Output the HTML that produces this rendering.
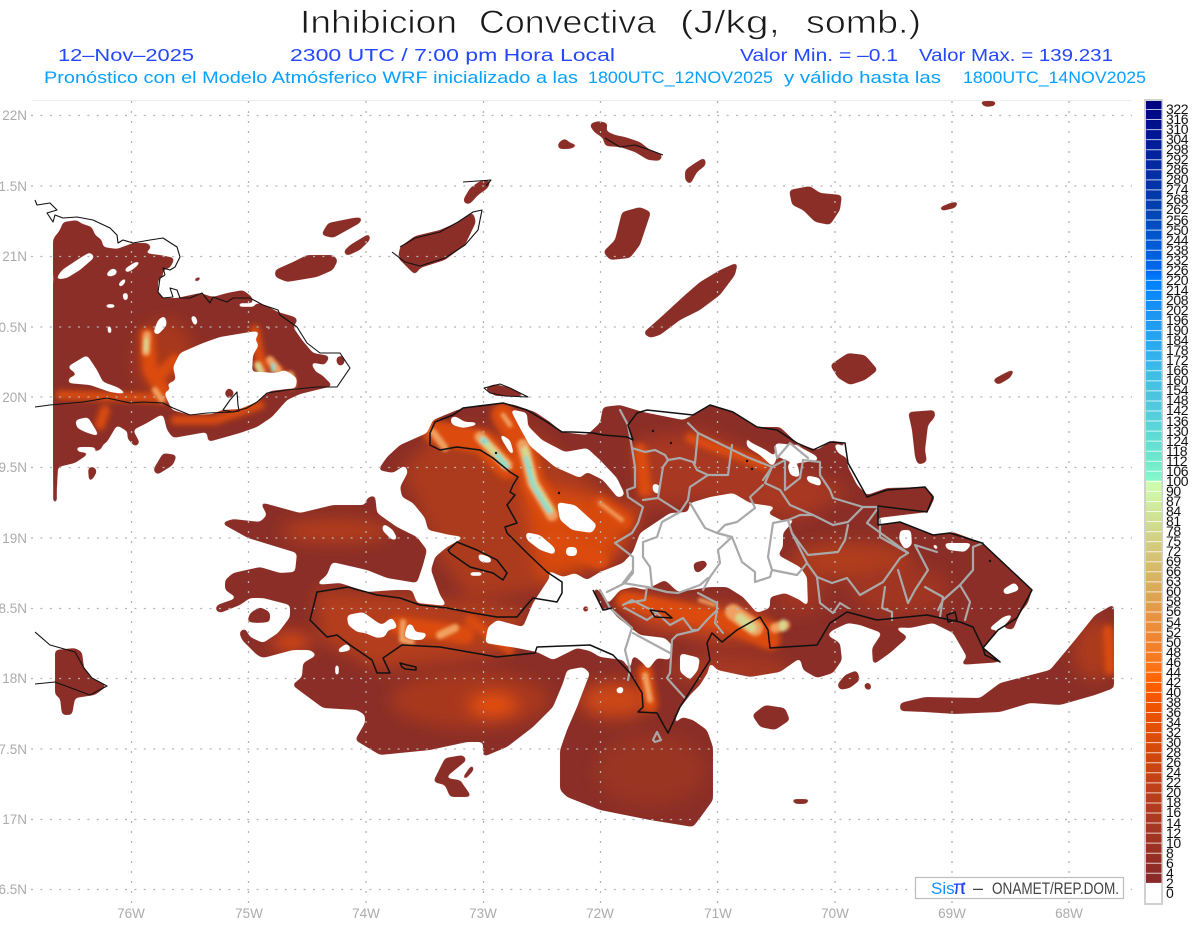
<!DOCTYPE html>
<html><head><meta charset="utf-8"><title>Inhibicion Convectiva</title>
<style>html,body{margin:0;padding:0;background:#fff}svg{display:block;font-family:"Liberation Sans",sans-serif}</style>
</head><body>
<svg width="1200" height="927" viewBox="0 0 1200 927" xmlns="http://www.w3.org/2000/svg">
<defs>
<filter id="b3" filterUnits="userSpaceOnUse" x="0" y="90" width="1200" height="830"><feGaussianBlur stdDeviation="3"/></filter>
<filter id="b2" filterUnits="userSpaceOnUse" x="0" y="90" width="1200" height="830"><feGaussianBlur stdDeviation="1.6"/></filter>
<filter id="b8" filterUnits="userSpaceOnUse" x="0" y="90" width="1200" height="830"><feGaussianBlur stdDeviation="8"/></filter>
<filter id="round" filterUnits="userSpaceOnUse" x="0" y="90" width="1200" height="830" color-interpolation-filters="sRGB"><feGaussianBlur stdDeviation="2"/><feComponentTransfer><feFuncA type="linear" slope="10" intercept="-4.5"/></feComponentTransfer></filter>
<linearGradient id="cb" x1="0" y1="0" x2="0" y2="1">
<stop offset="0" stop-color="#00007f"/><stop offset=".061" stop-color="#00209a"/><stop offset=".139" stop-color="#0042b0"/><stop offset=".178" stop-color="#0058d0"/><stop offset=".216" stop-color="#0068ea"/><stop offset=".229" stop-color="#0080ff"/><stop offset=".267" stop-color="#1a92f2"/><stop offset=".306" stop-color="#28a6ee"/><stop offset=".344" stop-color="#3cbce8"/><stop offset=".382" stop-color="#50c4e0"/><stop offset=".422" stop-color="#5cd8d8"/><stop offset=".46" stop-color="#70e8cc"/><stop offset=".485" stop-color="#88f8cc"/><stop offset=".486" stop-color="#ccffb0"/><stop offset=".499" stop-color="#d0f8a8"/><stop offset=".524" stop-color="#cfe898"/><stop offset=".55" stop-color="#d0d888"/><stop offset=".575" stop-color="#d4c878"/><stop offset=".601" stop-color="#d8b868"/><stop offset=".627" stop-color="#dca858"/><stop offset=".652" stop-color="#e49848"/><stop offset=".679" stop-color="#ec8a38"/><stop offset=".705" stop-color="#f47e28"/><stop offset=".73" stop-color="#fc7010"/><stop offset=".743" stop-color="#ff6000"/><stop offset=".769" stop-color="#f05400"/><stop offset=".807" stop-color="#e04e08"/><stop offset=".845" stop-color="#cc4610"/><stop offset=".884" stop-color="#bc4018"/><stop offset=".922" stop-color="#a83a20"/><stop offset=".962" stop-color="#983024"/><stop offset=".987" stop-color="#8c2c28"/><stop offset="1" stop-color="#8a2a2a"/>
</linearGradient>
<mask id="land" maskUnits="userSpaceOnUse" x="0" y="90" width="1200" height="830"><path fill="#fff" fill-rule="evenodd" filter="url(#round)" d="
M53 503 53 239 60 230 63 222 78 220 80 223 92 227 95 235 102 240 103 247 117 249 133 243 148 243 152 248 143 253 160 255 175 258 170 268 163 270 163 277 158 280 158 293 163 298 177 298 200 293 213 297 227 293 243 290 252 297 253 302 265 305 278 312 295 317 298 320 293 327 302 340 313 353 330 356 325 365 310 362 316 372 322 375 333 386 300 394 287 400 272 417 257 427 240 433 208 442 207 432 173 438 167 430 163 414 157 417 147 423 133 430 140 443 135 447 127 438 128 432 117 425 107 442 90 453 75 463 58 467 57 490 57 503Z
M250 332 220 337 203 343 180 353 173 367 176 380 165 385 165 395 172 410 190 415 213 414 222 410 240 409 257 402 270 391 296 388 297 378 285 370 275 373 262 372 252 372 253 355 259 345 255 340 260 331Z
M55 280 62 270 80 258 90 252 95 257 80 270 67 278Z
M105 275 112 268 118 270 116 275 108 277Z
M117 285 125 277 127 280 121 288Z
M123 270 135 262 143 260 135 268 127 273Z
M122 293 128 292 128 300 124 302Z
M105 304 116 304 116 308 105 308Z
M107 325 111 325 112 334 108 335Z
M153 333 158 320 165 315 167 325 158 335Z
M190 316 195 315 198 322 195 328Z
M67 367 87 355 97 370 103 382 117 387 130 395 110 392 90 385 67 383 70 377 78 375Z
M75 420 88 417 100 437 85 432 77 428Z
M75 447 105 447 95 453 78 452Z
M238 303 255 303 256 307 238 307Z
M267 322 270 325 271 333 267 330Z
M224 393 229 387 235 393 229 400Z
M164 388 168 385 171 389 167 392Z
M337 356 344 356 345 363 340 367 336 362Z
M589 124 598 121 608 123 606 131 615 135 625 137 640 142 650 150 663 155 660 161 648 160 635 152 620 147 605 146 603 138 594 132Z
M558 143 565 138 570 143 580 145 570 149 558 149Z
M463 200 470 188 480 181 491 180 488 188 478 195 470 204 465 204Z
M400 247 415 236 440 230 458 222 473 212 476 222 465 245 445 260 420 268 415 275 405 265 398 258Z
M343 252 350 245 370 233 370 240 360 250 347 256Z
M321 235 328 223 353 218 363 217 360 223 333 238Z
M275 270 293 262 307 255 333 255 338 260 333 270 317 277 287 282 275 277Z
M603 252 615 240 622 212 640 207 651 212 645 230 640 245 630 258 610 260Z
M643 333 660 318 685 295 700 282 720 270 738 262 735 275 720 295 700 310 680 320 660 335 650 338Z
M685 170 695 163 705 157 706 165 697 172 690 185 685 180Z
M789 190 810 186 820 193 842 195 840 210 830 225 815 222 803 210 792 205Z
M938 208 950 203 960 201 955 208 942 211Z
M830 365 848 353 865 355 878 370 865 380 850 385 838 378Z
M992 380 1005 373 1016 368 1010 378 998 385Z
M908 412 935 410 935 417 928 425 925 450 927 462 918 465 915 457 912 430Z
M484 388 495 384 510 388 528 397 510 396 495 396Z
M55 650 75 648 82 652 84 668 92 678 107 686 95 695 75 698 72 715 62 715 60 698 55 695Z
M153 470 163 453 177 455 173 465 157 475Z
M88 467 95 467 97 472 92 480 89 483Z
M193 279 200 276 203 278 195 283Z
M978 101 997 101 995 106 985 107Z
M900 703 925 697 980 698 1000 683 1050 670 1075 640 1095 615 1114 604 1114 688 1095 695 1060 705 1030 703 1000 712 955 714 925 712 900 711Z
M837 685 845 675 857 670 860 680 850 688 840 690Z
M863 684 870 682 872 690 866 690Z
M433 782 445 758 463 755 467 760 445 778 460 780 472 797 450 797 445 785Z
M462 778 473 763 474 770 465 780Z
M752 715 765 705 785 708 790 720 775 730 760 727Z
M790 799 812 799 806 804 795 804Z
M250 613 260 607 270 612 270 622 258 623 247 622Z
M593 590 597 588 612 608 603 612 600 603Z
M582 607 588 605 589 611 584 613Z
M693 563 705 560 708 565 700 572 695 573Z
M221 523 233 519 260 522 267 515 260 502 300 513 333 505 365 505 367 498 375 495 377 513 397 527 417 537 427 550 423 565 417 583 387 578 367 570 332 562 327 575 315 585 340 583 367 592 395 590 412 590 417 603 447 606 440 595 431 570 435 557 447 547 465 537 450 535 428 530 425 518 413 503 402 497 400 487 408 472 405 465 393 473 378 470 387 457 400 445 427 433 433 420 457 410 480 405 503 403 515 405 535 412 550 422 562 432 587 435 600 423 603 407 620 405 643 412 683 420 693 415 710 405 733 412 757 427 780 427 797 443 817 450 833 440 845 443 848 467 857 485 867 495 887 488 925 487 935 497 928 512 878 518 878 525 900 522 923 532 933 535 953 532 983 543 1010 570 1032 590 1028 603 1020 613 1013 630 1000 627 997 633 982 648 1002 662 960 665 967 657 953 633 933 623 910 628 893 627 908 637 890 653 873 665 872 648 882 633 860 625 848 623 833 630 827 635 840 643 842 660 833 673 817 678 803 670 800 658 780 672 750 677 717 670 710 662 708 672 700 685 690 695 680 708 672 727 682 717 693 720 707 730 713 747 713 800 700 818 693 827 650 820 600 810 567 797 560 790 560 750 567 730 577 707 590 673 583 667 567 670 563 683 553 707 533 727 507 747 483 757 483 742 467 742 430 750 380 755 355 740 365 723 365 715 357 710 323 708 292 685 302 677 303 663 317 655 310 650 293 650 263 658 257 655 242 640 239 632 245 628 250 637 263 643 278 633 290 617 290 605 263 598 250 598 240 605 220 613 215 610 217 605 237 598 225 590 225 580 233 573 260 567 280 573 295 572 297 553 248 538Z
M533 603 550 577 547 570 563 577 575 573 587 580 600 572 623 563 633 552 640 533 670 513 688 512 690 503 710 497 733 493 750 503 777 507 767 513 785 522 797 517 783 533 783 547 778 555 800 567 807 577 808 607 800 600 785 593 770 597 770 608 757 613 743 597 727 587 710 587 678 592 665 580 645 590 633 587 620 590 607 605 617 617 640 635 665 638 672 645 670 660 657 658 648 670 643 663 633 655 630 670 623 660 600 657 590 651 577 648 553 660 537 652 517 648 485 643 488 627 497 620 523 627Z
M510 409 527 413 528 426 542 440 565 452 587 448 600 460 617 478 625 495 618 498 603 480 587 472 580 478 555 467 530 446 520 428Z
M450 418 455 416 465 422 477 422 478 425 463 428 452 425Z
M498 432 510 440 515 457 510 453 502 440Z
M557 502 575 505 597 525 592 533 572 530 560 520Z
M525 532 540 535 555 548 555 555 540 550 527 540Z
M566 547 577 547 577 556 566 556Z
M477 553 490 557 493 563 480 562Z
M469 572 483 572 483 576 469 576Z
M383 523 393 530 398 540 392 540 382 530Z
M680 653 700 658 698 670 690 680 680 672Z
M616 688 624 686 623 694 616 693Z
M833 443 845 447 847 458 838 453Z
M745 432 750 442 766 450 777 458 773 467 760 455 747 447Z
M775 443 795 445 815 455 820 460 800 463 785 460 775 455Z
M787 463 798 465 800 478 790 475Z
M805 475 820 478 822 487 808 482Z
M652 483 660 485 660 495 653 492Z
M900 530 911 530 912 545 905 550 899 540Z
M943 543 973 543 965 552 948 550Z
M930 543 938 545 938 553Z
M1002 590 1015 582 1020 590 1005 595Z
M987 630 1003 617 1015 613 1005 625 997 630Z
M347 615 363 612 377 622 382 625 392 617 398 628 388 630 385 637 377 638 365 633 357 632 348 625Z
M404 637 408 623 413 625 415 632 428 633 423 640 413 640Z
M337 650 347 643 352 650 338 653Z
M335 664 339 664 339 676 335 676Z
M298 596 302 596 302 600 298 600Z
"/></mask>
</defs>

<!-- header -->
<g font-size="32" fill="#1a1a1a" stroke="#fff" stroke-width=".7">
<text x="300" y="33" textLength="157" lengthAdjust="spacingAndGlyphs">Inhibicion</text>
<text x="479" y="33" textLength="177" lengthAdjust="spacingAndGlyphs">Convectiva</text>
<text x="680" y="33" textLength="100" lengthAdjust="spacingAndGlyphs">(J/kg,</text>
<text x="806" y="33" textLength="115" lengthAdjust="spacingAndGlyphs">somb.)</text>
</g>
<g font-size="17.5" fill="#2447ff">
<text x="58" y="61" textLength="136" lengthAdjust="spacingAndGlyphs">12–Nov–2025</text>
<text x="290" y="61" textLength="325" lengthAdjust="spacingAndGlyphs">2300 UTC / 7:00 pm Hora Local</text>
<text x="740" y="61" textLength="158" lengthAdjust="spacingAndGlyphs">Valor Min. = –0.1</text>
<text x="919" y="61" textLength="194" lengthAdjust="spacingAndGlyphs">Valor Max. = 139.231</text>
</g>
<g font-size="16.5" fill="#06a0ff">
<text x="44" y="83" textLength="534" lengthAdjust="spacingAndGlyphs">Pronóstico con el Modelo Atmósferico WRF inicializado a las</text>
<text x="588" y="83" textLength="185" lengthAdjust="spacingAndGlyphs">1800UTC_12NOV2025</text>
<text x="784" y="83" textLength="157" lengthAdjust="spacingAndGlyphs">y válido hasta las</text>
<text x="963" y="83" textLength="183" lengthAdjust="spacingAndGlyphs">1800UTC_14NOV2025</text>
</g>
<path d="M32 100.5H1132" stroke="#eee" stroke-width="1"/>

<!-- map fill -->
<g mask="url(#land)">
<rect x="0" y="90" width="1200" height="830" fill="#8b2e27"/>
<g filter="url(#b8)">
<path d="M315 590 400 595 530 610 500 655 380 670 320 640Z" fill="#b33c1c"/>
<path d="M400 470 440 430 530 430 640 520 620 560 540 590 470 600 440 560 420 510Z" fill="#ab3a1d"/>
<path d="M520 480 640 510 610 560 540 580Z" fill="#d84a10"/>
<path d="M635 440 700 430 850 490 800 520 700 500 640 510Z" fill="#a83820"/>
<path d="M620 595 760 610 775 640 710 640 640 625Z" fill="#c8441a"/>
<ellipse cx="850" cy="560" rx="60" ry="18" fill="#b03c1c"/>
<ellipse cx="800" cy="590" rx="25" ry="25" fill="#a03620"/>
<ellipse cx="900" cy="590" rx="50" ry="25" fill="#a03620"/>
<ellipse cx="470" cy="700" rx="80" ry="28" fill="#a8381f"/>
<ellipse cx="493" cy="705" rx="24" ry="11" fill="#e6500e"/>
<ellipse cx="615" cy="700" rx="35" ry="18" fill="#cc4616"/>
<ellipse cx="650" cy="770" rx="55" ry="35" fill="#9a3423"/>
<ellipse cx="335" cy="531" rx="55" ry="12" fill="#b33c1c"/>
<ellipse cx="291" cy="642" rx="20" ry="9" fill="#d84a12"/>
<ellipse cx="730" cy="670" rx="60" ry="16" fill="#a53820"/>
<ellipse cx="165" cy="360" rx="30" ry="40" fill="#a8381f"/>
<ellipse cx="1095" cy="650" rx="22" ry="30" fill="#ab3a1d"/>
</g>
<g filter="url(#b3)" fill="none" stroke-linecap="round" stroke-linejoin="round">
<g stroke="#dc4c0e">
<path d="M60 395 165 398" stroke-width="9"/>
<path d="M147 335 150 370 165 395" stroke-width="15"/>
<path d="M155 380 175 360" stroke-width="12"/>
<path d="M175 420 215 420 260 405" stroke-width="9"/>
<path d="M105 410 100 425" stroke-width="10"/>
<path d="M255 330 260 360 290 380" stroke-width="10"/>
<path d="M435 432 483 442 507 467" stroke-width="24"/>
<path d="M503 415 523 445 533 483 552 515" stroke-width="24"/>
<path d="M600 503 625 522" stroke-width="14"/>
<path d="M555 540 600 560" stroke-width="18"/>
<path d="M690 438 765 465" stroke-width="10"/>
<path d="M640 450 645 490" stroke-width="14"/>
<path d="M625 600 770 630" stroke-width="18"/>
<path d="M398 625 465 635" stroke-width="18"/>
<path d="M470 620 510 650" stroke-width="10"/>
<path d="M645 672 650 705" stroke-width="15"/>
<path d="M1108 630 1110 670" stroke-width="10"/>
<path d="M730 622 770 640" stroke-width="20"/>
</g>
</g>
<g filter="url(#b2)" fill="none" stroke-linecap="round" stroke-linejoin="round">
<g stroke="#f0a060">
<path d="M147 335 146 352" stroke-width="8"/>
<path d="M155 390 162 400" stroke-width="6"/>
<path d="M433 432 445 448" stroke-width="7"/>
<path d="M480 437 507 465" stroke-width="11"/>
<path d="M523 445 533 483 552 515" stroke-width="12"/>
<path d="M503 415 510 425" stroke-width="5"/>
<path d="M600 503 622 520" stroke-width="4"/>
<path d="M733 612 755 628" stroke-width="16"/>
<path d="M403 622 402 640 412 642" stroke-width="6"/>
<path d="M455 628 440 635" stroke-width="8"/>
<path d="M645 675 650 700" stroke-width="6"/>
<path d="M258 365 262 372 M270 360 278 370 M290 375 292 385" stroke-width="8"/>
<path d="M775 628 785 625" stroke-width="10"/>
<path d="M700 600 715 605" stroke-width="4"/>
</g>
<g stroke="#d6d890">
<path d="M146 340 146 350" stroke-width="4"/>
<path d="M483 440 506 465" stroke-width="7"/>
<path d="M525 450 534 485 550 510" stroke-width="7"/>
<path d="M740 618 752 628" stroke-width="9"/>
<path d="M258 365 260 372 M290 377 291 384" stroke-width="5"/>
<path d="M783 623 783 628" stroke-width="7"/>
</g>
<g stroke="#78e0d4">
<path d="M483 440 486 442" stroke-width="5"/>
<path d="M497 455 507 467" stroke-width="4"/>
<path d="M526 458 533 485 545 505 550 512" stroke-width="4"/>
<path d="M273 365 273 370" stroke-width="4"/>
</g>
</g>
</g>

<!-- grid -->
<g fill="none" stroke="#b4b4b4" stroke-width="1.3">
<path stroke-dasharray="2 7.400" d="M31 115.5H1132M31 186H1132M31 256.5H1132M31 327H1132M31 397H1132M31 467.5H1132M31 538H1132M31 608.5H1132M31 678.5H1132M31 749H1132M31 819.5H1132M31 889.5H1132"/>
<path stroke-dasharray="2 8" d="M131.500 101V905M248.500 101V905M366 101V905M483.500 101V905M600.500 101V905M717.500 101V905M835 101V905M952 101V905M1069 101V905"/>
</g>

<!-- gray borders -->
<g fill="none" stroke="#a9a9a9" stroke-width="2.2" stroke-linejoin="round" stroke-linecap="round">
<path d="M620 410 628 425 632 448 635 467 635 487 627 490 628 497 643 507 638 523 632 533 615 543 633 557 633 573 625 583 607 592"/>
<path d="M632 448 645 452 655 450 665 455 668 460 680 458 693 462 697 470 708 475 728 475 732 445"/>
<path d="M688 423 698 433 695 463"/>
<path d="M698 433 747 457 772 467 765 483 780 490 790 505 813 515 833 525 848 522 863 507 878 507"/>
<path d="M668 460 663 467 658 498 680 512 662 522 657 537 643 542 643 557 650 567 652 587"/>
<path d="M708 475 690 487 688 500 680 512"/>
<path d="M658 498 643 500"/>
<path d="M690 503 705 528 717 533 725 525 737 522 755 508 750 497 763 485"/>
<path d="M717 533 732 537 718 550 720 563 710 577 703 590"/>
<path d="M732 537 742 562 755 572 755 582 770 577 772 570 768 557 773 523 788 520 800 515 813 515"/>
<path d="M772 570 797 575 803 568 807 563 792 533 788 520"/>
<path d="M792 533 808 555 838 552 845 540 848 525"/>
<path d="M807 563 817 577 832 583 847 578 860 595 883 582 900 558 908 553 867 523 878 508"/>
<path d="M908 553 880 537 880 520"/>
<path d="M817 577 820 603 833 613 840 603 848 608"/>
<path d="M885 587 882 608 892 612 892 620"/>
<path d="M898 570 908 603 915 590 928 570 915 545 937 552"/>
<path d="M925 587 943 597 940 617"/>
<path d="M943 600 960 585 973 570 973 547 983 543"/>
<path d="M960 585 970 602 965 620"/>
<path d="M943 600 938 610"/>
<path d="M763 480 772 467 785 460 785 490 800 478 803 460 820 462 820 475 830 490 833 498 863 507"/>
<path d="M775 447 777 458 790 443 808 458"/>
<path d="M633 570 623 583 647 587 667 592 678 593 700 585 708 578"/>
<path d="M647 587 645 600 627 603 623 605 632 600 657 613 647 620 625 608"/>
<path d="M657 613 670 625 683 618 692 630 698 630 677 635 672 640 670 673 667 678 675 687 685 698"/>
<path d="M698 593 717 603 717 610 707 620 698 630"/>
<path d="M717 610 715 623 723 633"/>
<path d="M600 590 610 608 632 628 625 650 630 670 628 680"/>
<path d="M633 633 670 653"/>
<path d="M653 740 657 732 661 740 655 742Z"/>
</g>

<!-- coast -->
<g fill="none" stroke="#111" stroke-width="1.1" stroke-linejoin="round">
<path d="M35 200 37 205 50 203 57 210 47 213 53 222 55 215 63 218 77 217 93 220 110 228 117 235 118 243 123 240 133 243 150 240 163 238 177 247 180 257 175 267 170 270 163 268 165 275"/>
<path d="M165 275 160 278 158 292 163 298 173 297 170 288 177 290 180 298 190 298 202 293 210 303 213 297 227 302 233 298 250 298 263 305 278 310 280 315 297 327 307 343 320 353 340 353 350 368 337 387 317 387 287 390 267 393 257 402 247 408 233 412 207 413 190 415 173 408 163 403 143 402 130 403 107 398 83 402 50 405 35 407"/>
<path d="M223 410 230 400 237 392 238 405 239 411 232 412Z"/>
<path d="M35 632 50 645 75 652 84 668 92 678 107 686 90 695 55 682 35 684"/>
<path d="M463 182 478 181 491 180 486 186 M400 247 415 238 440 232 458 222 473 212 482 210 478 230 465 245 445 258 420 266 405 262 392 252"/>
<path d="M605 138 620 147 635 145 650 150 663 155"/>
<path d="M484 388 500 384 510 388 528 397 505 396 490 393Z"/>
</g>
<g fill="none" stroke="#111" stroke-width="1.5" stroke-linejoin="round">
<path d="M435 422 430 433 430 445 440 450 457 447 480 450 493 458 510 472 518 477 513 485 510 492 515 495 507 505 517 523 505 527 507 533 527 553 547 572 562 582 562 593 557 602 533 598 525 607 517 617 497 617 473 613 447 608 420 605 400 598 377 595 348 587 317 592 310 620 327 637 337 635 350 645 372 660 377 673 390 673 383 658 402 645 440 647 497 657 535 653 537 647 590 645 613 655 630 673 642 693 643 707 638 712 657 713 668 733 680 707 710 660 707 643 712 633 722 642 737 630 760 617 768 630 770 648 817 645 830 623 847 612 877 620 927 615 960 622 973 627 983 648 1000 662 985 655 983 648 998 630 1017 618 1032 590 982 543 950 533 933 535 900 522 878 525 878 506 927 512 933 497 925 487 887 490 867 497 848 463 845 443 830 442 813 450 797 443 777 430 757 427 733 412 710 405 693 415 647 410 637 413 628 425 633 440 627 437 603 435 593 433 573 432 562 432 547 422 527 410 503 403 463 408 453 415Z"/>
<path d="M448 550 457 542 477 550 497 560 507 573 503 580 493 573 470 567 450 553Z"/>
<path d="M650 610 665 612 672 618 655 617Z M593 590 603 610 612 608"/>
<path d="M400 663 407 665 416 667 416 670 405 669 402 667Z"/>
<path d="M947 615 955 612 957 620 948 622Z"/>
</g>
<g fill="#111"><circle cx="653" cy="431" r="1.2"/><circle cx="671" cy="443" r="1.2"/><circle cx="747" cy="461" r="1.2"/><circle cx="752" cy="469" r="1.2"/><circle cx="559" cy="493" r="1.2"/><circle cx="496" cy="453" r="1.2"/><circle cx="990" cy="561" r="1.2"/></g>

<!-- axis labels -->
<g font-size="13.5" fill="#ababab" text-anchor="end">
<text x="27" y="120">22N</text><text x="27" y="191">1.5N</text><text x="27" y="261">21N</text><text x="27" y="332">0.5N</text><text x="27" y="402">20N</text><text x="27" y="472">9.5N</text><text x="27" y="543">19N</text><text x="27" y="613">8.5N</text><text x="27" y="683">18N</text><text x="27" y="754">7.5N</text><text x="27" y="824">17N</text><text x="27" y="894">6.5N</text>
</g>
<g font-size="13.5" fill="#ababab" text-anchor="middle">
<text x="131" y="918">76W</text><text x="249" y="918">75W</text><text x="366" y="918">74W</text><text x="483" y="918">73W</text><text x="600" y="918">72W</text><text x="718" y="918">71W</text><text x="835" y="918">70W</text><text x="952" y="918">69W</text><text x="1069" y="918">68W</text>
</g>

<!-- logo box -->
<rect x="915.500" y="877.500" width="208" height="21" fill="#fff" stroke="#bdbdbd" stroke-width="1.2"/>
<text x="931" y="894" font-size="17" fill="#1590ff">Sis</text>
<text x="953" y="894" font-size="19" fill="#2040ff">π</text>
<text x="961" y="894" font-size="16" fill="#2040ff">ſ</text>
<text x="973" y="894" font-size="18" fill="#444">–</text>
<text x="992" y="894" font-size="16.5" fill="#444" textLength="127" lengthAdjust="spacingAndGlyphs">ONAMET/REP.DOM.</text>

<!-- colour bar -->
<rect x="1145" y="100" width="17" height="804" fill="#fff" stroke="#d0d0d0" stroke-width="2"/>
<rect x="1146" y="101" width="15.500" height="782" fill="url(#cb)"/>
<path d="M1154 109V883" stroke="#fff" stroke-opacity=".75" stroke-width="15.500" stroke-dasharray="1 9.050" fill="none"/>
<g font-size="14" fill="#111" letter-spacing="-.4">
<text x="1166" y="114">322</text><text x="1166" y="124">316</text><text x="1166" y="134">310</text><text x="1166" y="144">304</text><text x="1166" y="154">298</text><text x="1166" y="164">292</text><text x="1166" y="174">286</text><text x="1166" y="184">280</text><text x="1166" y="194">274</text><text x="1166" y="204">268</text>
<text x="1166" y="214">262</text><text x="1166" y="225">256</text><text x="1166" y="235">250</text><text x="1166" y="245">244</text><text x="1166" y="255">238</text><text x="1166" y="265">232</text><text x="1166" y="275">226</text><text x="1166" y="285">220</text><text x="1166" y="295">214</text><text x="1166" y="305">208</text>
<text x="1166" y="315">202</text><text x="1166" y="325">196</text><text x="1166" y="335">190</text><text x="1166" y="345">184</text><text x="1166" y="355">178</text><text x="1166" y="365">172</text><text x="1166" y="375">166</text><text x="1166" y="385">160</text><text x="1166" y="395">154</text><text x="1166" y="405">148</text>
<text x="1166" y="415">142</text><text x="1166" y="426">136</text><text x="1166" y="436">130</text><text x="1166" y="446">124</text><text x="1166" y="456">118</text><text x="1166" y="466">112</text><text x="1166" y="476">106</text><text x="1166" y="486">100</text>
<text x="1166" y="496">90</text><text x="1166" y="506">87</text><text x="1166" y="516">84</text><text x="1166" y="526">81</text><text x="1166" y="536">78</text><text x="1166" y="546">75</text><text x="1166" y="556">72</text><text x="1166" y="566">69</text><text x="1166" y="576">66</text><text x="1166" y="586">63</text><text x="1166" y="596">60</text>
<text x="1166" y="606">58</text><text x="1166" y="616">56</text><text x="1166" y="627">54</text><text x="1166" y="637">52</text><text x="1166" y="647">50</text><text x="1166" y="657">48</text><text x="1166" y="667">46</text><text x="1166" y="677">44</text><text x="1166" y="687">42</text><text x="1166" y="697">40</text>
<text x="1166" y="707">38</text><text x="1166" y="717">36</text><text x="1166" y="727">34</text><text x="1166" y="737">32</text><text x="1166" y="747">30</text><text x="1166" y="757">28</text><text x="1166" y="767">26</text><text x="1166" y="777">24</text><text x="1166" y="787">22</text><text x="1166" y="797">20</text>
<text x="1166" y="807">18</text><text x="1166" y="817">16</text><text x="1166" y="828">14</text><text x="1166" y="838">12</text><text x="1166" y="848">10</text><text x="1166" y="858">8</text><text x="1166" y="868">6</text><text x="1166" y="878">4</text><text x="1166" y="888">2</text><text x="1166" y="898">0</text>
</g>
</svg>
</body></html>
